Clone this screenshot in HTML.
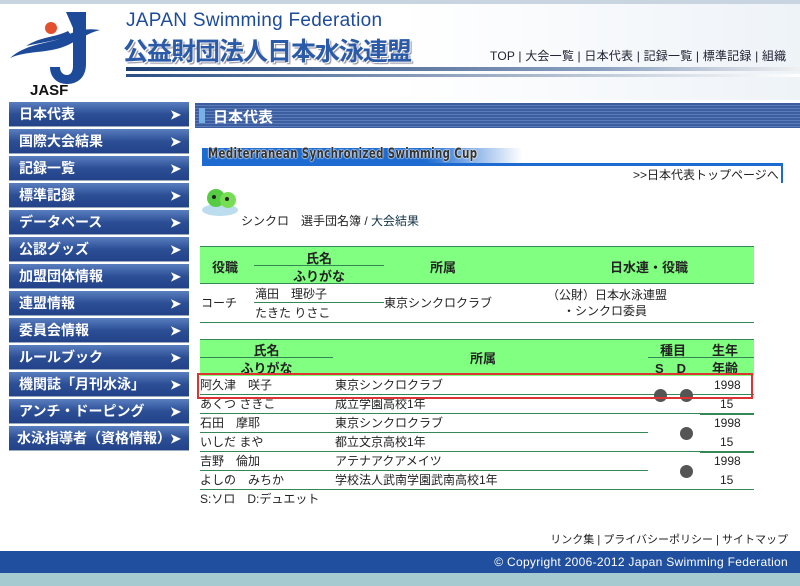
<!DOCTYPE html>
<html><head><meta charset="utf-8"><style>
*{margin:0;padding:0;box-sizing:border-box}
body{width:800px;height:586px;position:relative;overflow:hidden;background:#fff;font-family:"Liberation Sans","Noto Sans CJK JP",sans-serif;color:#222}
.a{position:absolute}
.menu div{position:absolute;left:9px;width:180px;height:25px;background:linear-gradient(#5a7fbf,#2c4f96 50%,#23428a);color:#fff;font-weight:bold;font-size:14px;line-height:25px;padding-left:10px;border-bottom:1px solid #9ab}
.menu div:after{content:"➤";position:absolute;right:8px;top:0;font-size:13px}
.hd{font-weight:bold;font-size:13px;text-align:center}
.dot{position:absolute;width:13px;height:13px;border-radius:50%;background:#555}
.rows{font-size:12px;line-height:19px}
</style></head><body>
<div class="a" style="left:0;top:0;width:800px;height:100px;background:linear-gradient(90deg,#fff 50%,#eef3f8)"></div>
<div class="a" style="left:0;top:0;width:800px;height:4px;background:#c8d4e0"></div>
<svg class="a" style="left:8px;top:8px" width="100" height="90" viewBox="0 0 100 90">
<circle cx="43" cy="20" r="6" fill="#e2502d"/>
<path d="M58 4h20v52c0 14-9 20-19 20s-17-7-17-17h10c0 5 3 8 7 8s6-4 6-9V20z" fill="#1d4b9a"/>
<path d="M2 50c18-16 42-14 56-22 10-6 22-8 34-6-12 3-20 9-32 15-20 9-40 5-58 13z" fill="#1d4b9a"/>
<path d="M18 38c16-10 28-8 42-15l3 4c-14 6-28 7-45 11z" fill="#1d4b9a"/>
<text x="22" y="87" font-family="Liberation Sans" font-weight="bold" font-size="15" fill="#111">JASF</text>
</svg>
<div class="a" style="left:126px;top:10px;font-size:19px;color:#1d4b9a;letter-spacing:0.3px">JAPAN Swimming Federation</div>
<div class="a" style="left:123px;top:32px;font-size:25px;font-weight:bold;color:#2a5aa8;letter-spacing:-1px;text-shadow:1px 1px 0 #fff,2px 2px 1px #889">公益財団法人日本水泳連盟</div>
<div class="a" style="left:126px;top:67px;width:674px;height:4px;background:linear-gradient(90deg,#1d3f75,#8ba0c0 70%,#f0f0f0)"></div>
<div class="a" style="left:126px;top:74px;width:674px;height:3px;background:linear-gradient(90deg,#2a4f85,#c0cad8 70%,#fff)"></div>
<div class="a" style="left:490px;top:47px;font-size:12px;color:#223;letter-spacing:0.2px">TOP | 大会一覧 | 日本代表 | 記録一覧 | 標準記録 | 組織</div>
<div class="menu">
<div style="top:102px">日本代表</div><div style="top:129px">国際大会結果</div><div style="top:156px">記録一覧</div><div style="top:183px">標準記録</div><div style="top:210px">データベース</div><div style="top:237px">公認グッズ</div><div style="top:264px">加盟団体情報</div><div style="top:291px">連盟情報</div><div style="top:318px">委員会情報</div><div style="top:345px">ルールブック</div><div style="top:372px">機関誌「月刊水泳」</div><div style="top:399px">アンチ・ドーピング</div><div style="top:426px;padding-left:8px">水泳指導者（資格情報）</div>
</div>
<div class="a" style="left:195px;top:103px;width:605px;height:25px;background:repeating-linear-gradient(#3c5ea0 0,#3c5ea0 2px,#5a7cb8 2px,#5a7cb8 3px)"></div>
<div class="a" style="left:199px;top:108px;width:6px;height:15px;background:#7ab0e8"></div>
<div class="a" style="left:213px;top:106px;color:#fff;font-weight:bold;font-size:15px">日本代表</div>
<div class="a" style="left:202px;top:148px;width:320px;height:16px;background:linear-gradient(90deg,#1d6bd0 70%,#fff)"></div>
<div class="a" style="left:202px;top:163px;width:581px;height:3px;background:#1d6bd0"></div>
<div class="a" style="left:781px;top:163px;width:2px;height:20px;background:#1d6bd0"></div>
<div class="a" style="left:208px;top:146px;font-family:'DejaVu Sans','Liberation Sans',sans-serif;font-weight:bold;font-size:14px;color:#333;letter-spacing:0.5px;transform:scaleX(0.73);transform-origin:0 0;white-space:nowrap;text-shadow:0 0 2px #fff,0 0 2px #fff,0 0 1px #fff">Mediterranean Synchronized Swimming Cup</div>
<div class="a" style="left:633px;top:166px;font-size:12px">&gt;&gt;日本代表トップページへ</div>
<svg class="a" style="left:202px;top:182px" width="40" height="36"><ellipse cx="18" cy="28" rx="18" ry="6" fill="#bde"/><circle cx="14" cy="16" r="9" fill="#5c4"/><circle cx="26" cy="18" r="8" fill="#7d5"/><circle cx="12" cy="15" r="2" fill="#222"/><circle cx="25" cy="17" r="2" fill="#222"/></svg>
<div class="a" style="left:241px;top:212px;font-size:12px">シンクロ　選手団名簿 / <span style="color:#134">大会結果</span></div>
<div class="a" style="left:200px;top:246px;width:554px;height:38px;background:#80ff80;border-top:1px solid #385;border-bottom:1px solid #385"></div>
<div class="a hd" style="left:212px;top:257px">役職</div>
<div class="a hd" style="left:254px;top:248px;width:130px">氏名</div>
<div class="a" style="left:254px;top:265px;width:130px;height:1px;background:#385"></div>
<div class="a hd" style="left:254px;top:266px;width:130px">ふりがな</div>
<div class="a hd" style="left:430px;top:257px">所属</div>
<div class="a hd" style="left:610px;top:257px">日水連・役職</div>
<div class="a" style="left:200px;top:322px;width:554px;height:1px;background:#385"></div>
<div class="a" style="left:201px;top:294px;font-size:12px">コーチ</div>
<div class="a" style="left:255px;top:285px;font-size:12px">滝田　理砂子</div>
<div class="a" style="left:254px;top:302px;width:130px;height:1px;background:#385"></div>
<div class="a" style="left:255px;top:304px;font-size:12px">たきた りさこ</div>
<div class="a" style="left:384px;top:294px;font-size:12px">東京シンクロクラブ</div>
<div class="a" style="left:547px;top:286px;font-size:12px">（公財）日本水泳連盟</div>
<div class="a" style="left:563px;top:302px;font-size:12px">・シンクロ委員</div>
<div class="a" style="left:200px;top:339px;width:554px;height:37px;background:#80ff80;border-top:1px solid #385"></div>
<div class="a hd" style="left:200px;top:340px;width:133px">氏名</div>
<div class="a" style="left:200px;top:357px;width:133px;height:1px;background:#385"></div>
<div class="a hd" style="left:200px;top:358px;width:133px">ふりがな</div>
<div class="a hd" style="left:470px;top:348px">所属</div>
<div class="a hd" style="left:648px;top:340px;width:50px">種目</div>
<div class="a" style="left:648px;top:357px;width:106px;height:1px;background:#385"></div>
<div class="a hd" style="left:655px;top:358px">S　D</div>
<div class="a hd" style="left:712px;top:340px">生年</div>
<div class="a hd" style="left:712px;top:358px">年齢</div>
<div class="a rows" style="left:200px;top:376px;width:554px">
<div style="height:19px;border-bottom:1px solid #385;position:relative">阿久津　咲子<span class="a" style="left:135px">東京シンクロクラブ</span><span class="a" style="left:514px">1998</span></div>
<div style="height:19px;border-bottom:1px solid #385;position:relative">あくつ さきこ<span class="a" style="left:135px">成立学園高校1年</span><span class="a" style="left:520px">15</span></div>
<div style="height:19px;border-bottom:1px solid #385;position:relative;width:448px">石田　摩耶<span class="a" style="left:135px;white-space:nowrap">東京シンクロクラブ</span><span class="a" style="left:514px">1998</span></div>
<div style="height:19px;border-bottom:1px solid #385;position:relative">いしだ まや<span class="a" style="left:135px">都立文京高校1年</span><span class="a" style="left:520px">15</span></div>
<div style="height:19px;border-bottom:1px solid #385;position:relative;width:448px">吉野　倫加<span class="a" style="left:135px;white-space:nowrap">アテナアクアメイツ</span><span class="a" style="left:514px">1998</span></div>
<div style="height:19px;border-bottom:1px solid #385;position:relative">よしの　みちか<span class="a" style="left:135px">学校法人武南学園武南高校1年</span><span class="a" style="left:520px">15</span></div>
<div>S:ソロ　D:デュエット</div>
</div>
<div class="a" style="left:700px;top:414px;width:54px;height:1px;background:#385"></div>
<div class="a" style="left:700px;top:452px;width:54px;height:1px;background:#385"></div>
<div class="dot" style="left:654px;top:389px"></div><div class="dot" style="left:680px;top:389px"></div>
<div class="dot" style="left:680px;top:427px"></div><div class="dot" style="left:680px;top:465px"></div>
<div class="a" style="left:197px;top:373px;width:556px;height:26px;border:2px solid #d33"></div>
<div class="a" style="right:12px;top:531px;font-size:11px;white-space:nowrap">リンク集 | プライバシーポリシー | サイトマップ</div>
<div class="a" style="left:0;top:551px;width:800px;height:22px;background:#1f4f9e"></div>
<div class="a" style="right:12px;top:555px;font-size:12px;color:#fff;letter-spacing:0.3px">© Copyright 2006-2012 Japan Swimming Federation</div>
<div class="a" style="left:0;top:573px;width:800px;height:13px;background:#a5cbd0"></div>
</body></html>
